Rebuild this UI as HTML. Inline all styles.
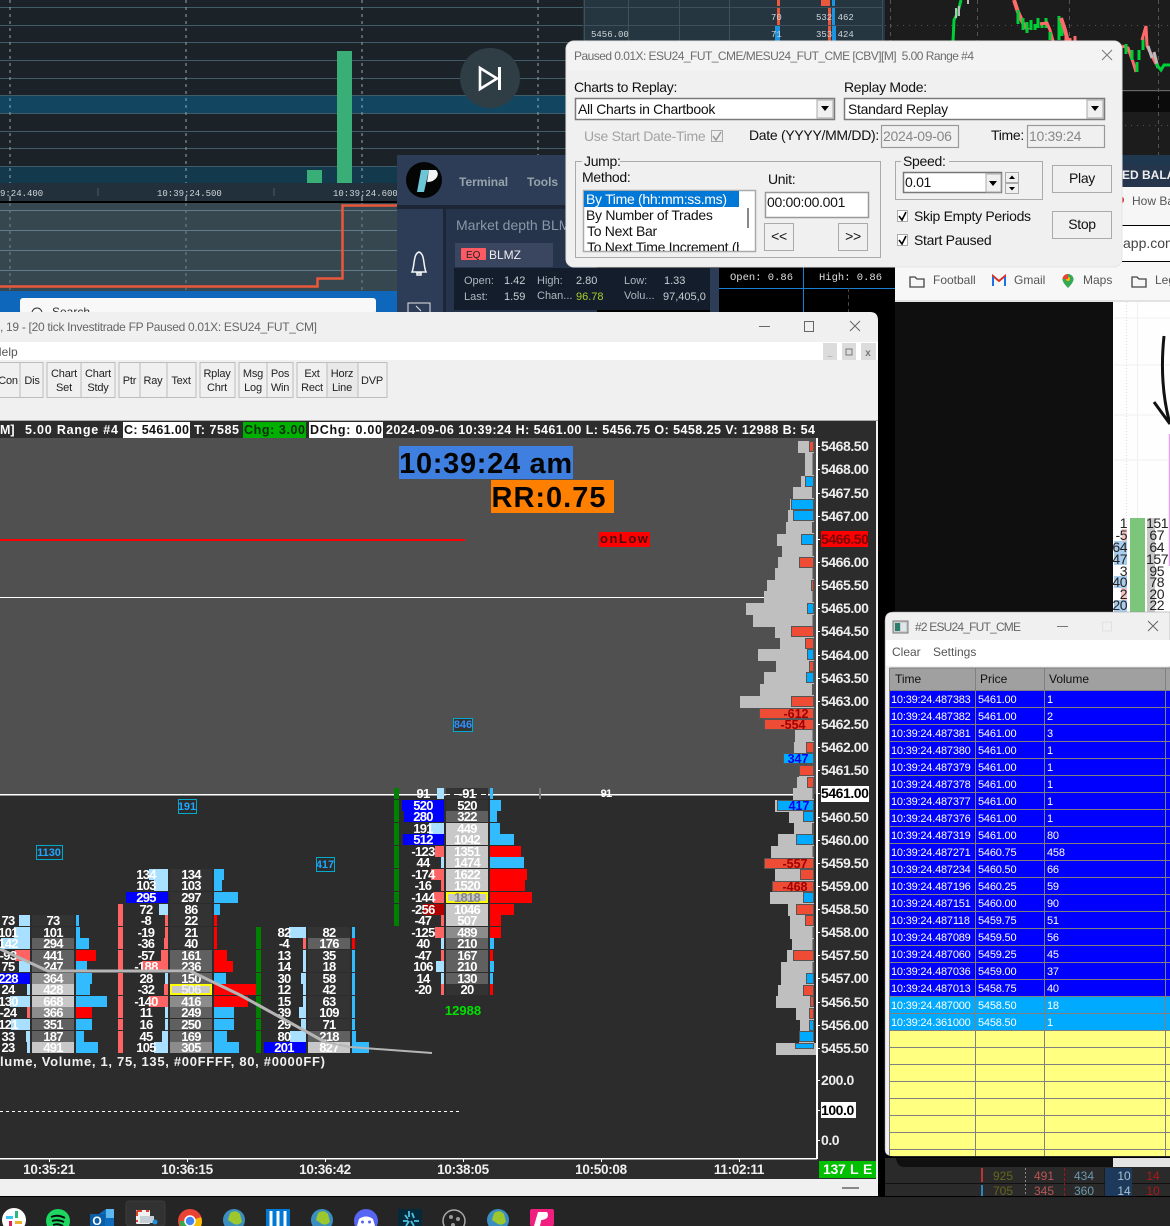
<!DOCTYPE html>
<html><head><meta charset="utf-8"><style>
html,body{margin:0;padding:0;background:#000;width:1170px;height:1226px;overflow:hidden}
svg{display:block;font-family:"Liberation Sans",sans-serif}
.h{height:11px}
.lb{fill:#aae0ff}.pk{fill:#ff6464}.bl{fill:#0000ff}.dr{fill:#b00000}
.b{fill:#33bbff}.r{fill:#ff0000}.gr{fill:#008000}
.v0{fill:#333;width:42px}.v1{fill:#606060;width:42px}.v2{fill:#8c8c8c;width:42px}.v3{fill:#c8c8c8;width:42px}
.f text,text.f{font:bold 13px "Liberation Sans",sans-serif;fill:#fff;text-anchor:middle;letter-spacing:-.7px}
.gy{fill:#bfbfbf}.gy rect{height:12px}.cr{fill:#ee4c35;stroke:#555}.cb{fill:#00aaff;stroke:#555}
.px text{font:bold 14px "Liberation Sans",sans-serif;fill:#eee;letter-spacing:-.45px}
.d{font-size:14px;fill:#111;letter-spacing:-.3px}
.t12{font-size:11px;fill:#fff;letter-spacing:-.2px}
.btn{fill:#f0f0f0;stroke:#bdbdbd}
.tb{font-size:11px;fill:#222;text-anchor:middle;letter-spacing:-.2px}
.hd{font:bold 12.5px "Liberation Sans",sans-serif;fill:#fff}
.m{font:9px "Liberation Mono",monospace;fill:#cfd6da}
.mk text{font-size:11px;fill:#aeb6c0}
</style></head><body>
<svg width="1170" height="1226" viewBox="0 0 1170 1226" xmlns="http://www.w3.org/2000/svg">
<rect width="1170" height="1226" fill="#000"/>

<!-- top-left chart -->
<rect width="590" height="183" fill="#1b2329"/>
<rect y="96" width="590" height="17" fill="#124560"/>
<rect y="166" width="590" height="17" fill="#13394d"/>
<g stroke="#3f5c68"><path d="M0 7.500H590M0 25.500H590M0 42.500H590M0 60.500H590M0 78.500H590M0 95.500H590M0 113.500H590M0 131.500H590M0 148.500H590M0 166.500H590"/></g>
<g stroke="#9aa6aa" stroke-dasharray="3 4"><path d="M10 0V183M186 0V183M362 0V183M538 0V170"/></g>
<rect x="307" y="170" width="15" height="13" fill="#39ae76"/>
<rect x="337" y="51" width="15" height="132" fill="#39ae76"/>
<rect y="183" width="590" height="18" fill="#21303a"/>
<rect y="201" width="590" height="2" fill="#000"/>
<path d="M10 196V201M186 196V201M362 196V201" stroke="#ccc"/><path d="M98 188V196M274 188V196" stroke="#4a5a62"/>
<text class="m" x="0" y="196">9:24.400</text>
<text class="m" x="157" y="196">10:39:24.500</text>
<text class="m" x="333" y="196">10:39:24.600</text>
<rect y="203" width="590" height="88" fill="#37474f"/>
<path d="M0 210.500H590M0 230.500H590M0 250.500H590M0 270.500H590" stroke="#5f7a88"/>
<g stroke="#77858c" stroke-dasharray="3 4"><path d="M10 203V290M186 203V290M362 203V290"/></g>
<path d="M0 286.500H317.500V278.500H342.500V205.500H400" fill="none" stroke="#e9583c" stroke-width="2.500"/>
<rect y="291" width="400" height="22" fill="#0f67bb"/>
<rect x="20" y="298" width="356" height="16" rx="3" fill="#f8f8f8"/>
<circle cx="37" cy="313" r="5" fill="none" stroke="#333"/><text x="52" y="316" font-size="12" fill="#333">Search</text>
<circle cx="490" cy="78" r="30" fill="#2f3d45"/>
<path d="M480 68L497 78.500L480 89Z" fill="none" stroke="#fff" stroke-width="2.600"/><rect x="498" y="67" width="3" height="23" fill="#fff"/>

<!-- top middle table -->
<rect x="583" y="0" width="302" height="165" fill="#263641"/>
<path d="M584.500 0V50M628.500 0V50M679.500 0V50M729.500 0V50M882.500 0V50" stroke="#3d505c"/>
<path d="M585 7.500H883M585 25.500H883" stroke="#3d505c"/>
<rect x="777" y="0" width="3" height="6" fill="#e9583c"/><rect x="777" y="8" width="3" height="17" fill="#e9583c"/><rect x="775" y="26" width="5" height="17" fill="#1b95e0"/>
<rect x="821" y="0" width="9" height="6" fill="#e9583c"/><rect x="832" y="0" width="3" height="6" fill="#1b95e0"/>
<rect x="828" y="8" width="3" height="17" fill="#e9583c"/><rect x="832" y="8" width="3" height="17" fill="#1b95e0"/><rect x="828" y="26" width="3" height="17" fill="#e9583c"/><rect x="832" y="26" width="4" height="17" fill="#1b95e0"/>
<g class="m"><text class="m" x="591" y="37">5456.00</text><text class="m" x="771" y="20">70</text><text class="m" x="771" y="37">71</text><text class="m" x="816" y="20">532 462</text><text class="m" x="816" y="37">353 424</text></g>

<!-- top right black chart -->
<rect x="885" y="0" width="285" height="165" fill="#1c1c1c"/>
<rect x="885" y="92" width="285" height="20" fill="#0b0b0b"/>
<path d="M885 90.500H1170" stroke="#666"/>
<path d="M885 25.500H1170M885 125.500H1170" stroke="#555" stroke-dasharray="1 5"/>
<path d="M890.500 0V165M977.500 0V165M1069.500 0V165M1158.500 0V165" stroke="#555" stroke-dasharray="4 4"/>
<rect x="885" y="155" width="285" height="10" fill="#20384f"/>
<g fill="none" stroke-width="3">
<path d="M953 42L954 20L958 12L961 0" stroke="#00d037"/>
<path d="M956 8V18M959 6V16M968 0V4" stroke="#bbb" stroke-width="2"/>
<path d="M1014 0L1018 12L1023 23L1028 30" stroke="#ff6a6a" stroke-width="4"/>
<path d="M1018 10V24M1023 18V30M1027 22V33M1031 20V30M1035 24V30M1038 18V28M1042 22V28M1046 18V28" stroke="#00d037"/>
<path d="M1040 24L1047 23L1050 30L1053 41" stroke="#ff6a6a"/>
<path d="M1050 32V40M1059 40V16M1062 24V36" stroke="#00d037"/>
<path d="M1061 18L1065 30L1068 42" stroke="#ff6a6a" stroke-width="4"/><path d="M1066 34V42M1070 38V42M1075 36V42" stroke="#ff6a6a"/>
<path d="M1122 46L1128 48L1133 62L1136 72" stroke="#ff6a6a"/>
<path d="M1126 44V54M1132 50V60M1137 62V72M1139 50V60M1143 38V50" stroke="#00d037"/>
<path d="M1142 40L1146 26L1147 46L1150 52L1156 64" stroke="#ff6a6a"/>
<path d="M1148 46L1152 58M1154 52L1158 68" stroke="#bbb"/>
<path d="M1156 64L1161 70L1164 65H1170" stroke="#00d037"/>
</g>

<!-- terminal panel -->
<rect x="397" y="155" width="200" height="158" fill="#2d3d58"/>
<rect x="397" y="205" width="200" height="4" fill="#1c2637"/>
<rect x="443" y="209" width="3" height="104" fill="#1c2637"/>
<rect x="446" y="209" width="151" height="104" fill="#25344b"/>
<ellipse cx="424" cy="180" rx="18" ry="18" fill="#050505"/>
<path d="M421 170H429L424 192H417Z" fill="#6cc6d6"/>
<path d="M429 170H436Q439 173 437 177Q434 182 427 182Z" fill="#f1f4f4"/>
<text x="459" y="186" font-size="12" fill="#97a4ac" font-weight="bold">Terminal</text>
<text x="527" y="186" font-size="12" fill="#97a4ac" font-weight="bold">Tools</text>
<text x="456" y="230" font-size="14" fill="#8a97a6">Market depth BLMZ</text>
<rect x="455" y="243" width="98" height="24" fill="#3a4560"/>
<rect x="461" y="248" width="25" height="12" rx="1" fill="#ff5a64"/>
<text x="466" y="258" font-size="10" fill="#222">EQ</text>
<text x="489" y="259" font-size="12" fill="#eee">BLMZ</text>
<path d="M419 252C413 254 415 265 412 272H426C423 265 425 254 419 252ZM417 273H421V275H417Z" fill="none" stroke="#f5f5f5" stroke-width="1.500"/>
<rect x="408" y="303" width="22" height="14" fill="none" stroke="#e5e5e5"/>
<path d="M416 306L421 311" stroke="#e5e5e5"/>
<rect x="454" y="268" width="260" height="42" fill="#141d2b"/>
<rect x="710" y="268" width="9" height="44" fill="#2d3d58"/>
<g class="mk">
<text x="464" y="284">Open:</text><text x="504" y="284" style="fill:#c6cdd4">1.42</text>
<text x="537" y="284">High:</text><text x="576" y="284" style="fill:#c6cdd4">2.80</text>
<text x="624" y="284">Low:</text><text x="664" y="284" style="fill:#c6cdd4">1.33</text>
<text x="464" y="300">Last:</text><text x="504" y="300" style="fill:#c6cdd4">1.59</text>
<text x="537" y="299">Chan...</text><text x="576" y="300" style="fill:#a8cc30">96.78</text>
<text x="624" y="299">Volu...</text><text x="663" y="300" style="fill:#c6cdd4">97,405,0</text>
</g>
<rect x="719" y="265" width="176" height="48" fill="#000"/>
<path d="M803.500 267V312M719 288.500H895" stroke="#1a7fd0"/>
<path d="M848.500 288V312" stroke="#444" stroke-dasharray="4 3"/>
<text x="730" y="280" font-size="10.500" fill="#ddd" font-family="Liberation Mono">Open: 0.86</text>
<text x="819" y="280" font-size="10.500" fill="#ddd" font-family="Liberation Mono">High: 0.86</text>

<!-- browser strip -->
<rect x="1110" y="165" width="60" height="22" fill="#25354c"/>
<text x="1122" y="179" font-size="12" font-weight="bold" fill="#eee">ED BALA</text>
<rect x="1110" y="187" width="60" height="38" fill="#f6f6f6"/>
<circle cx="1120" cy="200" r="4" fill="#d22"/>
<text x="1132" y="205" font-size="12" fill="#555">How Ba</text>
<rect x="1110" y="226" width="60" height="35" fill="#fff"/>
<text x="1123" y="248" font-size="14" fill="#444">app.com</text>
<rect x="895" y="262" width="275" height="39" fill="#f7f7f7"/>
<rect x="895" y="300" width="275" height="2" fill="#e2e2e2"/>
<path d="M910 277H915L917 279H924V287H910Z" fill="none" stroke="#444" stroke-width="1.300"/>
<text x="933" y="284" font-size="12" fill="#555">Football</text>
<path d="M993 286V276L999 281L1005 276V286" fill="none" stroke="#d93025" stroke-width="2"/><path d="M993 286V277M1005 286V277" stroke="#1a73e8" stroke-width="2"/>
<text x="1014" y="284" font-size="12" fill="#555">Gmail</text>
<path d="M1068 274A5.500 5.500 0 0 1 1073.500 280Q1073 283 1068 288Q1063 283 1062.500 280A5.500 5.500 0 0 1 1068 274Z" fill="#34a853"/><circle cx="1068" cy="279" r="2" fill="#fbbc05"/><path d="M1062.500 279A5.500 5.500 0 0 1 1068 274V279Z" fill="#ea4335"/>
<text x="1083" y="284" font-size="12" fill="#555">Maps</text>
<path d="M1132 277H1137L1139 279H1146V287H1132Z" fill="none" stroke="#444" stroke-width="1.300"/>
<text x="1155" y="284" font-size="12" fill="#555">Leg</text>

<!-- black block + white chart -->
<rect x="880" y="302" width="15" height="312" fill="#000"/>
<rect x="895" y="302" width="219" height="312" fill="#0f0f0f"/>
<rect x="1113" y="302" width="57" height="312" fill="#fefefe"/>
<path d="M1114 318H1170M1114 365H1170M1114 415H1170M1114 460H1170M1137.500 302V612" stroke="#f0f0f0"/>
<path d="M1126.500 302V612" stroke="#ddd" stroke-dasharray="1 2"/>
<path d="M1164 336C1161 365 1162 395 1170 424M1154 402L1170 424" fill="none" stroke="#111" stroke-width="3"/>
<path d="M1169.500 434V566" stroke="#e7a0ee" stroke-width="1.500"/>
<rect x="1130" y="518" width="15" height="94" fill="#7cc67c"/>
<rect x="1114" y="541" width="13" height="24" fill="#a9cdec"/><rect x="1114" y="576" width="13" height="12" fill="#a9cdec"/><rect x="1114" y="600" width="13" height="12" fill="#a9cdec"/><rect x="1122" y="529" width="5" height="12" fill="#f2c6c6"/><rect x="1121" y="588" width="6" height="12" fill="#f2c6c6"/>
<rect x="1147" y="518" width="8" height="94" fill="#c8c8c8"/>
<g font-size="14" fill="#222" text-anchor="end" letter-spacing="-.5"><text x="1127" y="528">1</text><text x="1127" y="540">-5</text><text x="1127" y="552">64</text><text x="1127" y="564">47</text><text x="1127" y="576">3</text><text x="1127" y="587">40</text><text x="1127" y="599">2</text><text x="1127" y="610">20</text>
<text x="1168" y="528">151</text><text x="1164" y="540">67</text><text x="1164" y="552">64</text><text x="1168" y="564">157</text><text x="1164" y="576">95</text><text x="1164" y="587">78</text><text x="1164" y="599">20</text><text x="1164" y="610">22</text></g>

<!-- main window -->
<path d="M0 312H870Q878 312 878 320V1196H0Z" fill="#f0f0f0"/>
<text x="0" y="331" font-size="12" fill="#666" textLength="317">, 19 - [20 tick Investitrade FP Paused 0.01X: ESU24_FUT_CM]</text>
<path d="M759 326.500H770" stroke="#666"/><rect x="804.500" y="321.500" width="9" height="10" fill="none" stroke="#666"/><path d="M850 321L860 331M860 321L850 331" stroke="#666"/>
<rect y="342" width="878" height="18" fill="#fff"/>
<text x="-7" y="356" font-size="12" fill="#555">Help</text>
<rect x="823" y="343" width="14" height="17" fill="#dcdcdc"/><rect x="842" y="343" width="14" height="17" fill="#dcdcdc"/><rect x="861" y="343" width="15" height="17" fill="#dcdcdc"/>
<text x="830" y="356" font-size="9" fill="#777" text-anchor="middle" font-weight="bold">_</text><rect x="846" y="349" width="6" height="6" fill="none" stroke="#777"/><text x="868" y="356" font-size="10" fill="#777" text-anchor="middle" font-weight="bold">x</text>
<g>
<rect class="btn" x="-2" y="362.500" width="22" height="35"/><rect class="btn" x="20" y="362.500" width="23" height="35"/>
<rect class="btn" x="47" y="362.500" width="34" height="35"/><rect class="btn" x="81" y="362.500" width="34" height="35"/>
<rect class="btn" x="119" y="362.500" width="21" height="35"/><rect class="btn" x="140" y="362.500" width="27" height="35"/><rect class="btn" x="167" y="362.500" width="29" height="35"/>
<rect class="btn" x="200" y="362.500" width="35" height="35"/>
<rect class="btn" x="239" y="362.500" width="28" height="35"/><rect class="btn" x="267" y="362.500" width="26" height="35"/>
<rect class="btn" x="297" y="362.500" width="30" height="35"/><rect class="btn" x="327" y="362.500" width="31" height="35" style="fill:#e9e9e9"/><rect class="btn" x="358" y="362.500" width="29" height="35"/>
</g>
<g>
<text class="tb" x="8" y="384">Con</text><text class="tb" x="32" y="384">Dis</text>
<text class="tb" x="64" y="377">Chart</text><text class="tb" x="64" y="391">Set</text>
<text class="tb" x="98" y="377">Chart</text><text class="tb" x="98" y="391">Stdy</text>
<text class="tb" x="129.500" y="384">Ptr</text><text class="tb" x="153" y="384">Ray</text><text class="tb" x="181" y="384">Text</text>
<text class="tb" x="217" y="377">Rplay</text><text class="tb" x="217" y="391">Chrt</text>
<text class="tb" x="253" y="377">Msg</text><text class="tb" x="253" y="391">Log</text>
<text class="tb" x="280" y="377">Pos</text><text class="tb" x="280" y="391">Win</text>
<text class="tb" x="312" y="377">Ext</text><text class="tb" x="312" y="391">Rect</text>
<text class="tb" x="342" y="377">Horz</text><text class="tb" x="342" y="391">Line</text>
<text class="tb" x="372" y="384">DVP</text>
</g>
<rect y="420" width="878" height="1" fill="#aaa"/>

<!-- chart area -->
<rect y="421" width="876" height="758" fill="#2c2c2c"/>
<rect y="438" width="817" height="356" fill="#505050"/>
<!-- header -->
<rect x="123" y="422" width="67" height="16" fill="#fff"/><rect x="243" y="422" width="63" height="16" fill="#00b000"/><rect x="309" y="422" width="74" height="16" fill="#fff"/>
<text class="hd" x="0" y="434">M]</text><text class="hd" x="25" y="434" textLength="93">5.00 Range #4</text>
<text class="hd" x="124" y="434" style="fill:#111" textLength="65">C: 5461.00</text><text class="hd" x="194" y="434" textLength="45">T: 7585</text>
<text class="hd" x="244" y="434" style="fill:#0a2b0a" textLength="61">Chg: 3.00</text>
<text class="hd" x="310" y="434" style="fill:#111" textLength="72">DChg: 0.00</text>
<text class="hd" x="386" y="434" textLength="429">2024-09-06 10:39:24 H: 5461.00 L: 5456.75 O: 5458.25 V: 12988 B: 54</text>

<!-- big labels -->
<rect x="399" y="446" width="174" height="33" fill="#3e7fdf"/>
<text x="486" y="473" font-size="29" font-weight="bold" fill="#050505" text-anchor="middle" letter-spacing=".7">10:39:24 am</text>
<rect x="491" y="480" width="123" height="33" fill="#ff8000"/>
<text x="549" y="507" font-size="29" font-weight="bold" fill="#050505" text-anchor="middle" letter-spacing="1">RR:0.75</text>
<rect y="539" width="465" height="2" fill="#f00"/>
<rect x="599" y="532" width="51" height="15" fill="#f00"/>
<text x="600" y="543" font-size="13" font-weight="bold" fill="#4a0a0a" letter-spacing="1.500">onLow</text>
<rect y="597" width="764" height="1" fill="#fff"/>
<rect y="794" width="793" height="1.500" fill="#fff"/>
<rect x="539" y="788" width="2" height="11" fill="#777"/>
<text class="f" x="606" y="797" style="font-size:11px">91</text>
<g font-size="11" font-weight="bold" text-anchor="middle">
<rect x="453.500" y="718.500" width="19" height="13" fill="#333" stroke="#0ac"/><text x="463" y="728" fill="#2f8fff">846</text>
<rect x="178.500" y="799.500" width="18" height="14" fill="#2c2c2c" stroke="#0ac"/><text x="187" y="810" fill="#1ea7ff">191</text>
<rect x="36.500" y="845.500" width="26" height="14" fill="#2c2c2c" stroke="#0ac"/><text x="49" y="856" fill="#1ea7ff">1130</text>
<rect x="316.500" y="857.500" width="18" height="14" fill="#2c2c2c" stroke="#0ac"/><text x="325" y="868" fill="#1ea7ff">417</text>
</g>

<!-- footprint col 1 -->
<g class="f">
<rect class="lb h" x="19" y="915" width="11"/><rect class="lb h" x="14" y="927" width="16"/><rect class="lb h" x="1" y="938" width="29"/><rect class="pk h" x="15" y="950" width="15"/><rect class="lb h" x="19" y="961" width="11"/><rect class="bl h" x="0" y="973" width="30"/><rect class="lb h" x="27" y="984" width="3"/><rect class="lb h" x="10" y="996" width="20"/><rect class="pk h" x="27" y="1007" width="3"/><rect class="lb h" x="11" y="1019" width="19"/><rect class="lb h" x="26" y="1031" width="4"/><rect class="lb h" x="27" y="1042" width="3"/>
<rect class="v0 h" x="32" y="915"/><rect class="v0 h" x="32" y="927"/><rect class="v1 h" x="32" y="938"/><rect class="v1 h" x="32" y="950"/><rect class="v1 h" x="32" y="961"/><rect class="v2 h" x="32" y="973"/><rect class="v3 h" x="32" y="984"/><rect class="v3 h" x="32" y="996"/><rect class="v2 h" x="32" y="1007"/><rect class="v1 h" x="32" y="1019"/><rect class="v1 h" x="32" y="1031"/><rect class="v3 h" x="32" y="1042"/>
<rect class="b h" x="76" y="915" width="3"/><rect class="b h" x="76" y="927" width="4"/><rect class="b h" x="76" y="938" width="13"/><rect class="r h" x="76" y="950" width="20"/><rect class="b h" x="76" y="961" width="11"/><rect class="b h" x="76" y="973" width="16"/><rect class="b h" x="76" y="984" width="14"/><rect class="b h" x="76" y="996" width="31"/><rect class="r h" x="76" y="1007" width="16"/><rect class="b h" x="76" y="1019" width="16"/><rect class="b h" x="76" y="1031" width="8"/><rect class="b h" x="76" y="1042" width="22"/>
<text x="8" y="925">73</text><text x="8" y="937">101</text><text x="8" y="948">142</text><text x="8" y="960">-93</text><text x="8" y="971">75</text><text x="8" y="983">228</text><text x="8" y="994">24</text><text x="8" y="1006">130</text><text x="8" y="1017">-24</text><text x="8" y="1029">121</text><text x="8" y="1041">33</text><text x="8" y="1052">23</text>
<text x="53" y="925">73</text><text x="53" y="937">101</text><text x="53" y="948">294</text><text x="53" y="960">441</text><text x="53" y="971">247</text><text x="53" y="983">364</text><text x="53" y="994">428</text><text x="53" y="1006">668</text><text x="53" y="1017">366</text><text x="53" y="1029">351</text><text x="53" y="1041">187</text><text x="53" y="1052">491</text>
</g>

<!-- footprint col 2 -->
<g class="f">
<rect class="pk h" x="118" y="904" width="5"/><rect class="pk h" x="118" y="915" width="5"/><rect class="pk h" x="118" y="927" width="5"/><rect class="pk h" x="118" y="938" width="5"/><rect class="pk h" x="118" y="950" width="5"/><rect class="pk h" x="118" y="961" width="5"/><rect class="pk h" x="118" y="973" width="5"/><rect class="pk h" x="118" y="984" width="5"/><rect class="pk h" x="118" y="996" width="5"/><rect class="pk h" x="118" y="1007" width="5"/><rect class="pk h" x="118" y="1019" width="5"/><rect class="pk h" x="118" y="1031" width="5"/><rect class="pk h" x="118" y="1042" width="5"/>
<rect class="lb h" x="149" y="869" width="19"/><rect class="lb h" x="154" y="880" width="14"/><rect class="bl h" x="126" y="892" width="42"/><rect class="lb h" x="159" y="904" width="9"/><rect class="pk h" x="165" y="915" width="3"/><rect class="pk h" x="165" y="927" width="3"/><rect class="pk h" x="164" y="938" width="4"/><rect class="pk h" x="161" y="950" width="7"/><rect class="pk h" x="142" y="961" width="26"/><rect class="lb h" x="165" y="973" width="3"/><rect class="pk h" x="164" y="984" width="4"/><rect class="pk h" x="149" y="996" width="19"/><rect class="lb h" x="165" y="1007" width="3"/><rect class="lb h" x="165" y="1019" width="3"/><rect class="lb h" x="162" y="1031" width="6"/><rect class="lb h" x="154" y="1042" width="14"/>
<rect class="v0 h" x="170" y="869"/><rect class="v0 h" x="170" y="880"/><rect class="v0 h" x="170" y="892"/><rect class="v0 h" x="170" y="904"/><rect class="v0 h" x="170" y="915"/><rect class="v0 h" x="170" y="927"/><rect class="v0 h" x="170" y="938"/><rect class="v1 h" x="170" y="950"/><rect class="v1 h" x="170" y="961"/><rect class="v1 h" x="170" y="973"/><rect class="v3 h" x="171" y="985" style="width:40px;height:9px;stroke:#ff0;stroke-width:2"/><rect class="v2 h" x="170" y="996"/><rect class="v1 h" x="170" y="1007"/><rect class="v1 h" x="170" y="1019"/><rect class="v1 h" x="170" y="1031"/><rect class="v2 h" x="170" y="1042"/>
<rect class="b h" x="214" y="869" width="10"/><rect class="b h" x="214" y="880" width="8"/><rect class="b h" x="214" y="892" width="24"/><rect class="b h" x="214" y="904" width="6"/><rect class="r h" x="214" y="915" width="3"/><rect class="r h" x="214" y="927" width="3"/><rect class="r h" x="214" y="938" width="3"/><rect class="r h" x="214" y="950" width="13"/><rect class="r h" x="214" y="961" width="19"/><rect class="b h" x="214" y="973" width="12"/><rect class="r h" x="214" y="984" width="42"/><rect class="r h" x="214" y="996" width="34"/><rect class="b h" x="214" y="1007" width="20"/><rect class="b h" x="214" y="1019" width="20"/><rect class="b h" x="214" y="1031" width="13"/><rect class="b h" x="214" y="1042" width="25"/>
<text x="146" y="879">134</text><text x="146" y="890">103</text><text x="146" y="902">295</text><text x="146" y="914">72</text><text x="146" y="925">-8</text><text x="146" y="937">-19</text><text x="146" y="948">-36</text><text x="146" y="960">-57</text><text x="146" y="971">-188</text><text x="146" y="983">28</text><text x="146" y="994">-32</text><text x="146" y="1006">-140</text><text x="146" y="1017">11</text><text x="146" y="1029">16</text><text x="146" y="1041">45</text><text x="146" y="1052">105</text>
<text x="191" y="879">134</text><text x="191" y="890">103</text><text x="191" y="902">297</text><text x="191" y="914">86</text><text x="191" y="925">22</text><text x="191" y="937">21</text><text x="191" y="948">40</text><text x="191" y="960">161</text><text x="191" y="971">236</text><text x="191" y="983">150</text><text x="191" y="994" style="fill:#eee">506</text><text x="191" y="1006">416</text><text x="191" y="1017">249</text><text x="191" y="1029">250</text><text x="191" y="1041">169</text><text x="191" y="1052">305</text>
</g>

<!-- footprint col 3 -->
<g class="f">
<rect class="gr h" x="256" y="927" width="5"/><rect class="gr h" x="256" y="938" width="5"/><rect class="gr h" x="256" y="950" width="5"/><rect class="gr h" x="256" y="961" width="5"/><rect class="gr h" x="256" y="973" width="5"/><rect class="gr h" x="256" y="984" width="5"/><rect class="gr h" x="256" y="996" width="5"/><rect class="gr h" x="256" y="1007" width="5"/><rect class="gr h" x="256" y="1019" width="5"/><rect class="gr h" x="256" y="1031" width="5"/><rect class="gr h" x="256" y="1042" width="5"/>
<rect class="lb h" x="289" y="927" width="17"/><rect class="pk h" x="303" y="938" width="3"/><rect class="lb h" x="303" y="950" width="3"/><rect class="lb h" x="303" y="961" width="3"/><rect class="lb h" x="301" y="973" width="5"/><rect class="lb h" x="303" y="984" width="3"/><rect class="lb h" x="303" y="996" width="3"/><rect class="lb h" x="299" y="1007" width="7"/><rect class="lb h" x="301" y="1019" width="5"/><rect class="lb h" x="290" y="1031" width="16"/><rect class="bl h" x="264" y="1042" width="42"/>
<rect class="v0 h" x="308" y="927"/><rect class="v1 h" x="308" y="938"/><rect class="v0 h" x="308" y="950"/><rect class="v0 h" x="308" y="961"/><rect class="v0 h" x="308" y="973"/><rect class="v0 h" x="308" y="984"/><rect class="v0 h" x="308" y="996"/><rect class="v0 h" x="308" y="1007"/><rect class="v0 h" x="308" y="1019"/><rect class="v1 h" x="308" y="1031"/><rect class="v3 h" x="308" y="1042"/>
<rect class="b h" x="352" y="927" width="3"/><rect class="r h" x="352" y="938" width="3"/><rect class="b h" x="352" y="950" width="3"/><rect class="b h" x="352" y="961" width="3"/><rect class="b h" x="352" y="973" width="3"/><rect class="b h" x="352" y="984" width="3"/><rect class="b h" x="352" y="996" width="3"/><rect class="b h" x="352" y="1007" width="3"/><rect class="b h" x="352" y="1019" width="3"/><rect class="b h" x="352" y="1031" width="4"/><rect class="b h" x="352" y="1042" width="17"/>
<text x="284" y="937">82</text><text x="284" y="948">-4</text><text x="284" y="960">13</text><text x="284" y="971">14</text><text x="284" y="983">30</text><text x="284" y="994">12</text><text x="284" y="1006">15</text><text x="284" y="1017">39</text><text x="284" y="1029">29</text><text x="284" y="1041">80</text><text x="284" y="1052">201</text>
<text x="329" y="937">82</text><text x="329" y="948">176</text><text x="329" y="960">35</text><text x="329" y="971">18</text><text x="329" y="983">58</text><text x="329" y="994">42</text><text x="329" y="1006">63</text><text x="329" y="1017">109</text><text x="329" y="1029">71</text><text x="329" y="1041">218</text><text x="329" y="1052">827</text>
</g>

<!-- footprint col 4 -->
<g class="f">
<rect class="gr h" x="394" y="788" width="5"/><rect class="gr h" x="394" y="800" width="5"/><rect class="gr h" x="394" y="811" width="5"/><rect class="gr h" x="394" y="823" width="5"/><rect class="gr h" x="394" y="834" width="5"/><rect class="gr h" x="394" y="846" width="5"/><rect class="gr h" x="394" y="857" width="5"/><rect class="gr h" x="394" y="869" width="5"/><rect class="gr h" x="394" y="880" width="5"/><rect class="gr h" x="394" y="892" width="5"/><rect class="gr h" x="394" y="904" width="5"/><rect class="gr h" x="394" y="915" width="5"/>
<rect class="lb h" x="437" y="788" width="7"/><rect class="bl h" x="402" y="800" width="42"/><rect class="bl h" x="404" y="811" width="40"/><rect class="lb h" x="429" y="823" width="15"/><rect class="bl h" x="403" y="834" width="41"/><rect class="pk h" x="435" y="846" width="9"/><rect class="lb h" x="441" y="857" width="3"/><rect class="pk h" x="431" y="869" width="13"/><rect class="pk h" x="441" y="880" width="3"/><rect class="pk h" x="433" y="892" width="11"/><rect class="dr h" x="423" y="904" width="21"/><rect class="pk h" x="441" y="915" width="3"/><rect class="pk h" x="435" y="927" width="9"/><rect class="lb h" x="441" y="938" width="3"/><rect class="pk h" x="441" y="950" width="3"/><rect class="lb h" x="436" y="961" width="8"/><rect class="lb h" x="441" y="973" width="3"/><rect class="pk h" x="441" y="984" width="3"/>
<rect class="v0 h" x="446" y="788"/><rect class="v0 h" x="446" y="800"/><rect class="v1 h" x="446" y="811"/><rect class="v3 h" x="446" y="823"/><rect class="v3 h" x="446" y="834"/><rect class="v3 h" x="446" y="846"/><rect class="v3 h" x="446" y="857"/><rect class="v3 h" x="446" y="869"/><rect class="v3 h" x="446" y="880"/><rect class="v3 h" x="447" y="893" style="width:40px;height:9px;stroke:#ff0;stroke-width:2"/><rect class="v3 h" x="446" y="904"/><rect class="v3 h" x="446" y="915"/><rect class="v2 h" x="446" y="927"/><rect class="v1 h" x="446" y="938"/><rect class="v1 h" x="446" y="950"/><rect class="v1 h" x="446" y="961"/><rect class="v1 h" x="446" y="973"/><rect class="v0 h" x="446" y="984"/>
<rect class="b h" x="490" y="788" width="3"/><rect class="b h" x="490" y="800" width="11"/><rect class="b h" x="490" y="811" width="7"/><rect class="b h" x="490" y="823" width="10"/><rect class="b h" x="490" y="834" width="24"/><rect class="r h" x="490" y="846" width="31"/><rect class="b h" x="490" y="857" width="34"/><rect class="r h" x="490" y="869" width="37"/><rect class="r h" x="490" y="880" width="35"/><rect class="r h" x="490" y="892" width="42"/><rect class="r h" x="490" y="904" width="24"/><rect class="r h" x="490" y="915" width="11"/><rect class="r h" x="490" y="927" width="11"/><rect class="b h" x="490" y="938" width="4"/><rect class="r h" x="490" y="950" width="3"/><rect class="b h" x="490" y="961" width="4"/><rect class="b h" x="490" y="973" width="3"/><rect class="r h" x="490" y="984" width="3"/>
<text x="423" y="798">91</text><text x="423" y="810">520</text><text x="423" y="821">280</text><text x="423" y="833">191</text><text x="423" y="844">512</text><text x="423" y="856">-123</text><text x="423" y="867">44</text><text x="423" y="879">-174</text><text x="423" y="890">-16</text><text x="423" y="902">-144</text><text x="423" y="914">-256</text><text x="423" y="925">-47</text><text x="423" y="937">-125</text><text x="423" y="948">40</text><text x="423" y="960">-47</text><text x="423" y="971">106</text><text x="423" y="983">14</text><text x="423" y="994">-20</text>
<text x="467" y="798">-91</text><text x="467" y="810">520</text><text x="467" y="821">322</text><text x="467" y="833">449</text><text x="467" y="844">1042</text><text x="467" y="856">1351</text><text x="467" y="867">1474</text><text x="467" y="879">1622</text><text x="467" y="890">1520</text><text x="467" y="902" style="fill:#888">1818</text><text x="467" y="914">1046</text><text x="467" y="925">507</text><text x="467" y="937">489</text><text x="467" y="948">210</text><text x="467" y="960">167</text><text x="467" y="971">210</text><text x="467" y="983">130</text><text x="467" y="994">20</text>
<text x="463" y="1015" style="fill:#00e000;font-size:13px;letter-spacing:0">12988</text>
</g>
<path d="M445 794.500H490" stroke="#fff" stroke-dasharray="5 4"/>

<!-- gray line -->
<path d="M0 949L48 971H190L240 995L325 1042" fill="none" stroke="#b5b5b5" stroke-width="3"/>
<path d="M325 1042L350 1047L432 1053" fill="none" stroke="#b5b5b5" stroke-width="2"/>
<text x="0" y="1066" font-size="13" font-weight="bold" fill="#f0f0f0" textLength="325">lume, Volume, 1, 75, 135, #00FFFF, 80, #0000FF)</text>
<path d="M0 1111.500H462" stroke="#fff" stroke-dasharray="3 3"/>

<!-- profile -->
<g class="gy">
<rect x="798" y="441" width="16"/><rect x="805" y="453" width="9"/><rect x="805" y="464" width="9"/><rect x="801" y="476" width="13"/><rect x="793" y="487" width="21"/><rect x="790" y="499" width="24"/><rect x="788" y="510" width="26"/><rect x="786" y="522" width="28"/><rect x="777" y="534" width="37"/><rect x="782" y="545" width="32"/><rect x="778" y="557" width="36"/><rect x="775" y="568" width="39"/><rect x="767" y="580" width="47"/><rect x="764" y="591" width="50"/><rect x="746" y="603" width="68"/><rect x="753" y="615" width="61"/><rect x="775" y="626" width="39"/><rect x="780" y="638" width="34"/><rect x="758" y="649" width="56"/><rect x="776" y="661" width="38"/><rect x="764" y="672" width="50"/><rect x="760" y="684" width="54"/><rect x="740" y="696" width="74"/><rect x="795" y="730" width="19"/><rect x="794" y="742" width="20"/><rect x="799" y="765" width="15"/><rect x="797" y="777" width="17"/><rect x="793" y="788" width="21"/><rect x="775" y="800" width="39"/><rect x="789" y="811" width="25"/><rect x="794" y="823" width="20"/><rect x="778" y="834" width="36"/><rect x="771" y="846" width="43"/><rect x="775" y="869" width="39"/><rect x="770" y="892" width="44"/><rect x="788" y="904" width="26"/><rect x="790" y="915" width="24"/><rect x="790" y="927" width="24"/><rect x="792" y="939" width="22"/><rect x="787" y="950" width="27"/><rect x="781" y="962" width="33"/><rect x="781" y="973" width="33"/><rect x="778" y="985" width="36"/><rect x="776" y="996" width="38"/><rect x="796" y="1008" width="18"/><rect x="800" y="1020" width="14"/><rect x="799" y="1031" width="15"/><rect x="776" y="1043" width="41"/>
</g>
<g>
<rect class="cr" x="809.500" y="441.500" width="4" height="10"/><rect class="cb" x="813" y="453.500" width="1" height="10"/><rect class="cr" x="813" y="464.500" width="1" height="10"/><rect class="cb" x="805.500" y="476.500" width="8" height="10"/><rect class="cb" x="812.500" y="487.500" width="1" height="10"/><rect class="cb" x="791.500" y="499.500" width="22" height="10"/><rect class="cb" x="793.500" y="510.500" width="20" height="10"/><rect class="cr" x="812.500" y="522.500" width="1" height="10"/><rect class="cb" x="801.500" y="534.500" width="12" height="10"/><rect class="cr" x="813" y="545.500" width="1" height="10"/><rect class="cr" x="799.500" y="557.500" width="14" height="10"/><rect class="cr" x="813" y="568.500" width="1" height="10"/><rect class="cr" x="811.500" y="580.500" width="2" height="10"/><rect class="cb" x="813" y="591.500" width="1" height="10"/><rect class="cb" x="807.500" y="603.500" width="6" height="10"/><rect class="cb" x="813" y="615.500" width="1" height="10"/><rect class="cr" x="791.500" y="626.500" width="22" height="10"/><rect class="cr" x="805.500" y="638.500" width="8" height="10"/><rect class="cb" x="807.500" y="649.500" width="6" height="10"/><rect class="cr" x="809.500" y="661.500" width="4" height="10"/><rect class="cb" x="806.500" y="672.500" width="7" height="10"/><rect class="cr" x="812.500" y="684.500" width="1" height="10"/><rect class="cr" x="791.500" y="696.500" width="22" height="10"/>
<rect class="cr" x="759.500" y="708.500" width="54" height="10"/><rect class="cr" x="764.500" y="719.500" width="49" height="10"/>
<rect class="cr" x="813" y="730.500" width="1" height="10"/><rect class="cr" x="806.500" y="742.500" width="7" height="10"/><rect class="cb" x="783.500" y="753.500" width="30" height="10"/><rect class="cr" x="799.500" y="765.500" width="14" height="10"/><rect class="cr" x="807.500" y="777.500" width="6" height="10"/><rect class="cr" x="813" y="788.500" width="1" height="10"/><rect class="cb" x="777.500" y="800.500" width="36" height="10"/><rect class="cb" x="803.500" y="811.500" width="10" height="10"/><rect class="cb" x="812.500" y="823.500" width="1" height="10"/><rect class="cb" x="796.500" y="834.500" width="17" height="10"/><rect class="cr" x="813" y="846.500" width="1" height="10"/><rect class="cr" x="764.500" y="858.500" width="49" height="10"/><rect class="cr" x="800.500" y="869.500" width="13" height="10"/><rect class="cr" x="772.500" y="881.500" width="41" height="10"/><rect class="cb" x="803.500" y="892.500" width="10" height="10"/><rect class="cr" x="796.500" y="904.500" width="17" height="10"/><rect class="cr" x="805.500" y="915.500" width="8" height="10"/><rect class="cr" x="813" y="927.500" width="1" height="10"/><rect class="cb" x="813" y="939.500" width="1" height="10"/><rect class="cr" x="793.500" y="950.500" width="20" height="10"/><rect class="cb" x="813" y="962.500" width="1" height="10"/><rect class="cb" x="806.500" y="973.500" width="7" height="10"/><rect class="cr" x="803.500" y="985.500" width="10" height="10"/><rect class="cr" x="810.500" y="996.500" width="3" height="10"/><rect class="cr" x="809.500" y="1008.500" width="4" height="10"/><rect class="cb" x="809.500" y="1020.500" width="4" height="10"/><rect class="cb" x="799.500" y="1031.500" width="14" height="10"/><rect class="cb" x="795.500" y="1043.500" width="18" height="5"/>
</g>
<g font-size="12.500" font-weight="bold" text-anchor="middle">
<text x="796" y="718" fill="#a00000">-612</text><text x="793" y="729" fill="#a00000">-554</text><text x="798" y="763" fill="#0000f0">347</text><text x="799" y="810" fill="#0000f0">417</text><text x="795" y="868" fill="#a00000">-557</text><text x="795" y="891" fill="#a00000">-468</text>
</g>

<!-- axes -->
<rect x="816" y="438" width="2" height="721" fill="#fff"/>
<rect y="1158" width="817" height="1.500" fill="#fff"/>
<path d="M49.500 1158V1162M187.500 1158V1162M325.500 1158V1162M463.500 1158V1162M601.500 1158V1162M739.500 1158V1162" stroke="#fff"/>
<path d="M818 446.500H820M818 469.500H820M818 493.500H820M818 516.500H820M818 539.500H820M818 562.500H820M818 585.500H820M818 608.500H820M818 631.500H820M818 655.500H820M818 678.500H820M818 701.500H820M818 724.500H820M818 747.500H820M818 770.500H820M818 793.500H820M818 817.500H820M818 840.500H820M818 863.500H820M818 886.500H820M818 909.500H820M818 932.500H820M818 955.500H820M818 978.500H820M818 1002.500H820M818 1025.500H820M818 1048.500H820M818 1080.500H820M818 1110.500H820M818 1140.500H820" stroke="#fff"/>
<rect x="821" y="531" width="47" height="16" fill="#f00"/><rect x="821" y="786" width="48" height="16" fill="#fff"/><rect x="821" y="1102" width="35" height="16" fill="#fff"/>
<g class="px">
<text x="821" y="451">5468.50</text><text x="821" y="474">5468.00</text><text x="821" y="498">5467.50</text><text x="821" y="521">5467.00</text><text x="821" y="544" style="fill:#7a0606">5466.50</text><text x="821" y="567">5466.00</text><text x="821" y="590">5465.50</text><text x="821" y="613">5465.00</text><text x="821" y="636">5464.50</text><text x="821" y="660">5464.00</text><text x="821" y="683">5463.50</text><text x="821" y="706">5463.00</text><text x="821" y="729">5462.50</text><text x="821" y="752">5462.00</text><text x="821" y="775">5461.50</text><text x="821" y="798" style="fill:#000">5461.00</text><text x="821" y="822">5460.50</text><text x="821" y="845">5460.00</text><text x="821" y="868">5459.50</text><text x="821" y="891">5459.00</text><text x="821" y="914">5458.50</text><text x="821" y="937">5458.00</text><text x="821" y="960">5457.50</text><text x="821" y="983">5457.00</text><text x="821" y="1007">5456.50</text><text x="821" y="1030">5456.00</text><text x="821" y="1053">5455.50</text>
<text x="821" y="1085">200.0</text><text x="821" y="1115" style="fill:#000">100.0</text><text x="821" y="1145">0.0</text>
</g>
<g font-size="13.500" font-weight="bold" fill="#f0f0f0" text-anchor="middle" letter-spacing="-.3">
<text x="49" y="1174">10:35:21</text><text x="187" y="1174">10:36:15</text><text x="325" y="1174">10:36:42</text><text x="463" y="1174">10:38:05</text><text x="601" y="1174">10:50:08</text><text x="739" y="1174">11:02:11</text>
</g>
<rect x="819" y="1161" width="57" height="17" fill="#00c000"/>
<g font-size="14" font-weight="bold" fill="#fff"><text x="823" y="1174" letter-spacing="-.3">137</text><text x="850" y="1174">L</text><text x="863" y="1174">E</text></g>
<rect y="1179" width="878" height="17" fill="#f0f0f0"/>
<rect x="842" y="1187" width="17" height="2" fill="#888"/>

<!-- bottom right table -->
<rect x="880" y="1158" width="5" height="38" fill="#000"/>
<rect x="885" y="1158" width="285" height="38" fill="#2a2a2a"/>
<path d="M896 1158H1113V1167H903Q897 1166 896 1158Z" fill="#101010"/>
<rect x="1113" y="1158" width="57" height="9" fill="#e4e4e4"/>
<path d="M885 1183.500H1170" stroke="#111"/>
<rect x="981" y="1168" width="2" height="14" fill="#b33"/><rect x="981" y="1185" width="2" height="11" fill="#2a86c0"/>
<path d="M1025.500 1168V1196" stroke="#888" stroke-dasharray="2 2"/><path d="M1064.500 1168V1196" stroke="#a11" stroke-dasharray="3 2"/><path d="M1105 1168V1196" stroke="#111"/>
<rect x="1105" y="1168" width="27" height="28" fill="#1d3a5c"/>
<g font-size="12" text-anchor="middle">
<text x="1003" y="1180" fill="#66661c">925</text><text x="1044" y="1180" fill="#b55">491</text><text x="1084" y="1180" fill="#6a98b0">434</text><text x="1124" y="1180" fill="#a9c0d0">10</text><text x="1153" y="1180" fill="#b01818">14</text>
<text x="1003" y="1195" fill="#66661c">705</text><text x="1044" y="1195" fill="#b55">345</text><text x="1084" y="1195" fill="#6a98b0">360</text><text x="1124" y="1195" fill="#a9c0d0">14</text><text x="1153" y="1195" fill="#b01818">10</text>
</g>

<!-- T&S window -->
<path d="M885 620Q885 612 893 612H1170V1156H893Q885 1156 885 1150Z" fill="#f0f0f0" stroke="#999" stroke-width=".5"/>
<rect x="893" y="621" width="15" height="12" fill="#ccc" stroke="#777"/><rect x="895" y="623" width="5" height="8" fill="#2b7d6c"/><rect x="901" y="623" width="5" height="8" fill="#dfe7ee"/>
<text x="915" y="631" font-size="12" fill="#666" textLength="106">#2 ESU24_FUT_CME</text>
<path d="M1057 626.500H1068" stroke="#777"/><rect x="1102.500" y="622" width="9" height="9" fill="none" stroke="#e0e0e0"/><path d="M1148 621L1158 631M1158 621L1148 631" stroke="#666"/>
<rect x="886" y="640" width="284" height="26" fill="#fff"/>
<text x="892" y="656" font-size="12" fill="#555">Clear</text><text x="933" y="656" font-size="12" fill="#555">Settings</text>
<rect x="889" y="668" width="281" height="22" fill="#a0a0a0"/>
<path d="M889.500 668H1170" stroke="#777"/>
<text x="895" y="683" font-size="12" fill="#111">Time</text><text x="980" y="683" font-size="12" fill="#111">Price</text><text x="1049" y="683" font-size="12" fill="#111">Volume</text>
<rect x="889" y="690" width="281" height="306" fill="#0000ff"/>
<rect x="889" y="996" width="281" height="34" fill="#00aaff"/>
<rect x="889" y="1030" width="281" height="126" fill="#ffff80"/>
<path d="M889 690.500H1170M889 707.500H1170M889 724.500H1170M889 741.500H1170M889 758.500H1170M889 775.500H1170M889 792.500H1170M889 809.500H1170M889 826.500H1170M889 843.500H1170M889 860.500H1170M889 877.500H1170M889 894.500H1170M889 911.500H1170M889 928.500H1170M889 945.500H1170M889 962.500H1170M889 979.500H1170M889 996.500H1170M889 1013.500H1170M889 1030.500H1170M889 1047.500H1170M889 1064.500H1170M889 1081.500H1170M889 1098.500H1170M889 1115.500H1170M889 1132.500H1170M889 1149.500H1170" stroke="#808080"/>
<path d="M889.500 668V1156M975.500 668V1156M1044.500 668V1156M1165.500 668V1156" stroke="#808080"/>
<g class="t12">
<text class="t12" x="891" y="703">10:39:24.487383</text><text class="t12" x="978" y="703">5461.00</text><text class="t12" x="1047" y="703">1</text>
<text class="t12" x="891" y="720">10:39:24.487382</text><text class="t12" x="978" y="720">5461.00</text><text class="t12" x="1047" y="720">2</text>
<text class="t12" x="891" y="737">10:39:24.487381</text><text class="t12" x="978" y="737">5461.00</text><text class="t12" x="1047" y="737">3</text>
<text class="t12" x="891" y="754">10:39:24.487380</text><text class="t12" x="978" y="754">5461.00</text><text class="t12" x="1047" y="754">1</text>
<text class="t12" x="891" y="771">10:39:24.487379</text><text class="t12" x="978" y="771">5461.00</text><text class="t12" x="1047" y="771">1</text>
<text class="t12" x="891" y="788">10:39:24.487378</text><text class="t12" x="978" y="788">5461.00</text><text class="t12" x="1047" y="788">1</text>
<text class="t12" x="891" y="805">10:39:24.487377</text><text class="t12" x="978" y="805">5461.00</text><text class="t12" x="1047" y="805">1</text>
<text class="t12" x="891" y="822">10:39:24.487376</text><text class="t12" x="978" y="822">5461.00</text><text class="t12" x="1047" y="822">1</text>
<text class="t12" x="891" y="839">10:39:24.487319</text><text class="t12" x="978" y="839">5461.00</text><text class="t12" x="1047" y="839">80</text>
<text class="t12" x="891" y="856">10:39:24.487271</text><text class="t12" x="978" y="856">5460.75</text><text class="t12" x="1047" y="856">458</text>
<text class="t12" x="891" y="873">10:39:24.487234</text><text class="t12" x="978" y="873">5460.50</text><text class="t12" x="1047" y="873">66</text>
<text class="t12" x="891" y="890">10:39:24.487196</text><text class="t12" x="978" y="890">5460.25</text><text class="t12" x="1047" y="890">59</text>
<text class="t12" x="891" y="907">10:39:24.487151</text><text class="t12" x="978" y="907">5460.00</text><text class="t12" x="1047" y="907">90</text>
<text class="t12" x="891" y="924">10:39:24.487118</text><text class="t12" x="978" y="924">5459.75</text><text class="t12" x="1047" y="924">51</text>
<text class="t12" x="891" y="941">10:39:24.487089</text><text class="t12" x="978" y="941">5459.50</text><text class="t12" x="1047" y="941">56</text>
<text class="t12" x="891" y="958">10:39:24.487060</text><text class="t12" x="978" y="958">5459.25</text><text class="t12" x="1047" y="958">45</text>
<text class="t12" x="891" y="975">10:39:24.487036</text><text class="t12" x="978" y="975">5459.00</text><text class="t12" x="1047" y="975">37</text>
<text class="t12" x="891" y="992">10:39:24.487013</text><text class="t12" x="978" y="992">5458.75</text><text class="t12" x="1047" y="992">40</text>
<text class="t12" x="891" y="1009">10:39:24.487000</text><text class="t12" x="978" y="1009">5458.50</text><text class="t12" x="1047" y="1009">18</text>
<text class="t12" x="891" y="1026">10:39:24.361000</text><text class="t12" x="978" y="1026">5458.50</text><text class="t12" x="1047" y="1026">1</text>
</g>

<!-- replay dialog -->
<rect x="566" y="41" width="556" height="226" rx="8" fill="#f0f0f0" stroke="#e4e4e4"/>
<path d="M567 71V49Q567 42 574 42H1114Q1121 42 1121 49V71Z" fill="#f3f3f3"/>
<text x="574" y="60" font-size="12" fill="#6d6d6d" textLength="400" xml:space="preserve">Paused 0.01X: ESU24_FUT_CME/MESU24_FUT_CME [CBV][M]  5.00 Range #4</text>
<path d="M1102 50L1112 60M1112 50L1102 60" stroke="#777"/>
<text class="d" x="574" y="92">Charts to Replay:</text><text class="d" x="844" y="92">Replay Mode:</text>
<rect x="575.500" y="98.500" width="259" height="21" fill="#fff" stroke="#7a7a7a" stroke-width="1.500"/>
<rect x="817" y="100" width="16" height="18" fill="#f0f0f0" stroke="#aaa"/><path d="M821 106H829L825 111Z" fill="#000"/>
<text class="d" x="578" y="114">All Charts in Chartbook</text>
<rect x="844.500" y="98.500" width="260" height="21" fill="#fff" stroke="#7a7a7a" stroke-width="1.500"/>
<rect x="1087" y="100" width="16" height="18" fill="#f0f0f0" stroke="#aaa"/><path d="M1091 106H1099L1095 111Z" fill="#000"/>
<text class="d" x="848" y="114">Standard Replay</text>
<text class="d" x="584" y="141" style="fill:#a3a3a3">Use Start Date-Time</text>
<rect x="711.500" y="130.500" width="11" height="11" fill="#eee" stroke="#aaa"/><path d="M713 136L716 140L721 132" fill="none" stroke="#999" stroke-width="1.500"/>
<text class="d" x="749" y="140">Date (YYYY/MM/DD):</text>
<rect x="881.500" y="125.500" width="77" height="22" fill="#f0f0f0" stroke="#999" stroke-width="1.200"/>
<text class="d" x="883" y="141" style="fill:#888">2024-09-06</text>
<text class="d" x="991" y="140">Time:</text>
<rect x="1027.500" y="125.500" width="77" height="22" fill="#f0f0f0" stroke="#999" stroke-width="1.200"/>
<text class="d" x="1029" y="141" style="fill:#888">10:39:24</text>
<!-- jump group -->
<rect x="575.500" y="161.500" width="305" height="96" fill="none" stroke="#aaa"/>
<rect x="582" y="155" width="38" height="14" fill="#f0f0f0"/>
<text class="d" x="584" y="166">Jump:</text><text class="d" x="582" y="182">Method:</text>
<rect x="583.500" y="190.500" width="172" height="61" fill="#fff" stroke="#aaa" stroke-width="1.500"/>
<rect x="584" y="191" width="155" height="16" fill="#0078d7"/>
<svg x="585" y="191" width="154" height="60"><text class="d" x="1" y="13" style="fill:#fff">By Time (hh:mm:ss.ms)</text><text class="d" x="1" y="29">By Number of Trades</text><text class="d" x="2" y="45">To Next Bar</text><text class="d" x="2" y="61">To Next Time Increment (hh</text></svg>
<rect x="747" y="208" width="2" height="20" fill="#888"/>
<text class="d" x="768" y="184">Unit:</text>
<rect x="765.500" y="192.500" width="103" height="25" fill="#fff" stroke="#999" stroke-width="1.500"/>
<text class="d" x="767" y="207">00:00:00.001</text>
<rect x="764.500" y="223.500" width="29" height="27" fill="#f0f0f0" stroke="#aaa"/><text class="d" x="779" y="241" text-anchor="middle">&lt;&lt;</text>
<rect x="838.500" y="223.500" width="29" height="27" fill="#f0f0f0" stroke="#aaa"/><text class="d" x="853" y="241" text-anchor="middle">&gt;&gt;</text>
<!-- speed -->
<rect x="895.500" y="161.500" width="147" height="38" fill="none" stroke="#aaa"/>
<rect x="901" y="155" width="48" height="14" fill="#f0f0f0"/>
<text class="d" x="903" y="166">Speed:</text>
<rect x="903.500" y="172.500" width="98" height="20" fill="#fff" stroke="#777" stroke-width="1.500"/>
<rect x="986" y="174" width="15" height="18" fill="#f0f0f0" stroke="#aaa"/><path d="M989 181H997L993 186Z" fill="#000"/>
<text class="d" x="905" y="187">0.01</text>
<rect x="1005.500" y="172.500" width="13" height="10" fill="#f0f0f0" stroke="#aaa"/><rect x="1005.500" y="183.500" width="13" height="10" fill="#f0f0f0" stroke="#aaa"/>
<path d="M1009 179H1015L1012 175.500ZM1009 187H1015L1012 190.500Z" fill="#000"/>
<rect x="1052.500" y="165.500" width="59" height="27" fill="#f0f0f0" stroke="#aaa"/><text class="d" x="1082" y="183" text-anchor="middle">Play</text>
<rect x="1052.500" y="211.500" width="59" height="27" fill="#f0f0f0" stroke="#aaa"/><text class="d" x="1082" y="229" text-anchor="middle">Stop</text>
<rect x="897.500" y="210.500" width="10" height="11" fill="#fff" stroke="#aaa"/><path d="M899 216L902 220L906 212" fill="none" stroke="#000" stroke-width="1.600"/>
<text class="d" x="914" y="221">Skip Empty Periods</text>
<rect x="897.500" y="234.500" width="10" height="11" fill="#fff" stroke="#aaa"/><path d="M899 240L902 244L906 236" fill="none" stroke="#000" stroke-width="1.600"/>
<text class="d" x="914" y="245">Start Paused</text>

<!-- taskbar -->
<rect y="1197" width="1170" height="29" fill="#252525"/>
<rect x="126" y="1201" width="39" height="25" rx="3" fill="#323232" stroke="#3c3c3c"/>
<circle cx="14" cy="1220" r="12" fill="#fff"/><rect x="6" y="1216" width="7" height="3" fill="#36c5f0"/><rect x="15" y="1211" width="3" height="7" fill="#2eb67d"/><rect x="15" y="1221" width="7" height="3" fill="#ecb22e"/><rect x="9" y="1221" width="3" height="7" fill="#e01e5a"/>
<circle cx="58" cy="1221" r="12" fill="#1ed760"/><path d="M51 1217Q58 1214 65 1218M52 1221Q58 1219 64 1222M53 1225Q58 1223 63 1226" fill="none" stroke="#0a0a0a" stroke-width="2"/>
<path d="M96 1216L106 1209H114V1226H96Z" fill="#0f6cbd"/><path d="M106 1209H114V1218H106Z" fill="#5cb8f0"/><rect x="90" y="1214" width="15" height="12" fill="#0a5ea8"/><text x="97" y="1225" font-size="12" font-weight="bold" fill="#fff" text-anchor="middle">O</text>
<rect x="136" y="1210" width="14" height="14" rx="1" fill="#f1f1f1"/><path d="M137 1211H142M137 1211V1216M146 1211H149M137 1220V1222" stroke="#e0402b" stroke-width="2"/><rect x="140" y="1216" width="14" height="7" fill="#c6cfd6"/><circle cx="155" cy="1222" r="2.500" fill="#2090e0"/>
<circle cx="190" cy="1221" r="12" fill="#ea4335"/><path d="M179.500 1221A11 11 0 0 0 195 1231L190 1221Z" fill="#34a853"/><path d="M190 1221L201 1217A12 12 0 0 1 196 1232Z" fill="#fbbc05"/><circle cx="190" cy="1221" r="5" fill="#4285f4" stroke="#fff" stroke-width="1.500"/>
<g><circle cx="234" cy="1220" r="11" fill="#3a8fc0"/><path d="M230 1213Q236 1209 240 1214L242 1222Q238 1226 234 1224L228 1220Z" fill="#9cc82e"/></g>
<rect x="266" y="1209" width="24" height="17" fill="#0078d4"/><path d="M271 1211V1226M278 1211V1226M285 1211V1226" stroke="#fff" stroke-width="3"/>
<g><circle cx="322" cy="1220" r="11" fill="#3a8fc0"/><path d="M318 1213Q324 1209 328 1214L330 1222Q326 1226 322 1224L316 1220Z" fill="#9cc82e"/></g>
<circle cx="366" cy="1221" r="12" fill="#5865f2"/><path d="M359 1219Q366 1214 373 1219L375 1226H357Z" fill="#fff"/><circle cx="362.500" cy="1222" r="1.500" fill="#5865f2"/><circle cx="369.500" cy="1222" r="1.500" fill="#5865f2"/>
<rect x="398" y="1209" width="24" height="17" fill="#052a3c"/><path d="M409 1211V1217M412 1213L414 1218M405 1215L408 1219M403 1221H408M414 1221H419M409 1221L406 1226M411 1221L414 1226" stroke="#4ec3e0" stroke-width="1.800"/>
<circle cx="454" cy="1221" r="11" fill="#222" stroke="#aaa" stroke-width="1.500"/><circle cx="451" cy="1217" r="2" fill="#999"/><circle cx="458" cy="1219" r="2" fill="#999"/><circle cx="453" cy="1225" r="2" fill="#999"/>
<g><circle cx="498" cy="1220" r="11" fill="#3a8fc0"/><path d="M494 1213Q500 1209 504 1214L506 1222Q502 1226 498 1224L492 1220Z" fill="#9cc82e"/></g>
<rect x="530" y="1209" width="24" height="17" rx="2" fill="#f01e7e"/><path d="M538 1212H543L540 1226H534Z" fill="#fff"/><path d="M543 1212H547Q549 1215 547 1218Q544 1220 541 1220Z" fill="#fff"/>
</svg>
</body></html>
